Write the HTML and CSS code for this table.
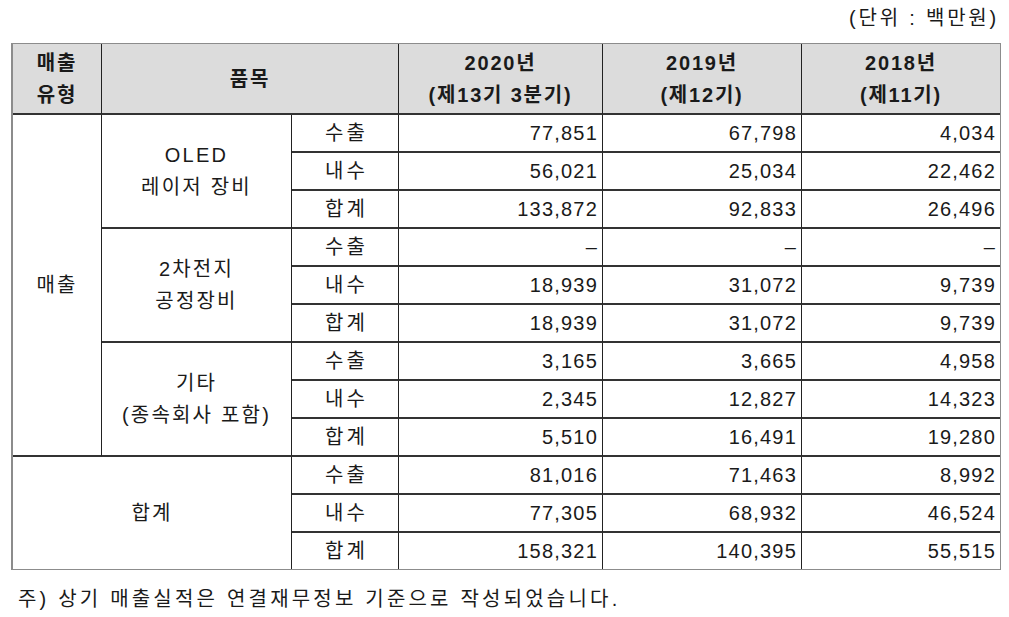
FILE: index.html
```html
<!DOCTYPE html>
<html lang="ko">
<head>
<meta charset="utf-8">
<link rel="stylesheet" href="styles.css">
</head>
<body>
<div class="page">
  <div class="unit">(단위 : 백만원)</div>
  <table class="sales">
    <colgroup>
      <col class="c1"><col class="c2"><col class="c3"><col class="c4"><col class="c5"><col class="c6">
    </colgroup>
    <thead>
      <tr>
        <th>매출<br>유형</th>
        <th colspan="2">품목</th>
        <th>2020년<br>(제13기 3분기)</th>
        <th>2019년<br>(제12기)</th>
        <th class="last">2018년<br>(제11기)</th>
      </tr>
    </thead>
    <tbody>
      <tr>
        <td rowspan="9" class="label">매출</td>
        <td rowspan="3" class="label">OLED<br>레이저 장비</td>
        <td class="kind">수출</td><td class="num">77,851</td><td class="num">67,798</td><td class="num last">4,034</td>
      </tr>
      <tr><td class="kind">내수</td><td class="num">56,021</td><td class="num">25,034</td><td class="num last">22,462</td></tr>
      <tr><td class="kind">합계</td><td class="num">133,872</td><td class="num">92,833</td><td class="num last">26,496</td></tr>
      <tr>
        <td rowspan="3" class="label">2차전지<br>공정장비</td>
        <td class="kind">수출</td><td class="num">–</td><td class="num">–</td><td class="num last">–</td>
      </tr>
      <tr><td class="kind">내수</td><td class="num">18,939</td><td class="num">31,072</td><td class="num last">9,739</td></tr>
      <tr><td class="kind">합계</td><td class="num">18,939</td><td class="num">31,072</td><td class="num last">9,739</td></tr>
      <tr>
        <td rowspan="3" class="label">기타<br>(종속회사 포함)</td>
        <td class="kind">수출</td><td class="num">3,165</td><td class="num">3,665</td><td class="num last">4,958</td>
      </tr>
      <tr><td class="kind">내수</td><td class="num">2,345</td><td class="num">12,827</td><td class="num last">14,323</td></tr>
      <tr><td class="kind">합계</td><td class="num">5,510</td><td class="num">16,491</td><td class="num last">19,280</td></tr>
      <tr>
        <td rowspan="3" colspan="2" class="label bottom">합계</td>
        <td class="kind">수출</td><td class="num">81,016</td><td class="num">71,463</td><td class="num last">8,992</td>
      </tr>
      <tr><td class="kind">내수</td><td class="num">77,305</td><td class="num">68,932</td><td class="num last">46,524</td></tr>
      <tr class="final"><td class="kind">합계</td><td class="num">158,321</td><td class="num">140,395</td><td class="num last">55,515</td></tr>
    </tbody>
  </table>
  <p class="note">주) 상기 매출실적은 연결재무정보 기준으로 작성되었습니다.</p>
</div>
</body>
</html>
```

FILE: styles.css
```css
html, body {
  margin: 0;
  padding: 0;
  background: #ffffff;
}

.page {
  width: 1009px;
  padding: 6px 0 0 0;
  font-family: "Liberation Sans", "Noto Sans CJK KR", sans-serif;
  color: #1a1a1a;
  font-size: 20px;
}

.unit {
  text-align: right;
  padding-right: 10px;
  height: 24px;
  line-height: 24px;
  letter-spacing: 2.8px;
  margin-bottom: 13px;
}

.sales {
  margin-left: 11px;
  width: 990px;
  border-collapse: separate;
  border-spacing: 0;
  border: 1px solid #8c8c8c;
  border-left-width: 2px;
  table-layout: fixed;
}

.c1 { width: 89px; }
.c2 { width: 190px; }
.c3 { width: 107px; }
.c4 { width: 204px; }
.c5 { width: 199px; }
.c6 { width: 198px; }

.sales th,
.sales td {
  padding: 0;
  border-right: 1px solid #222;
  border-bottom: 2px solid #333;
  vertical-align: middle;
  line-height: 32px;
}

.sales th {
  background: #dcdcdc;
  font-weight: bold;
  height: 69px;
  text-align: center;
  letter-spacing: 1.8px;
}

.sales td {
  height: 36px;
}

.sales .last {
  border-right: none;
}

.sales .label {
  text-align: center;
  letter-spacing: 2.2px;
}

.sales .kind {
  text-align: center;
  letter-spacing: 3px;
  padding-left: 3px;
}

.sales .num {
  text-align: right;
  padding-right: 4px;
  letter-spacing: 1.2px;
}

.sales .bottom,
.sales .final td {
  border-bottom: none;
}

.note {
  margin: 17px 0 0 18px;
  letter-spacing: 3.2px;
  line-height: 24px;
}
```
